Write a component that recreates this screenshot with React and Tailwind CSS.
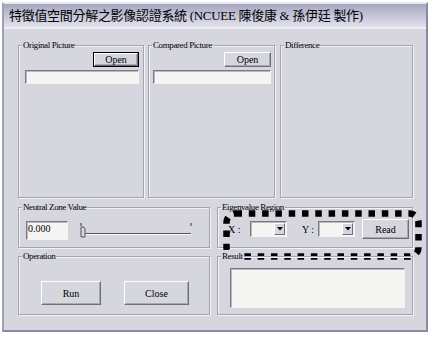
import React from "react"

const serif = { fontFamily: '"Liberation Serif", "Noto Sans CJK TC", serif' }

// etched group box with the caption sitting on the top line
const Group = ({ label, className = "", children }) => (
  <div className={`relative border border-[#a4a4b0] shadow-[inset_1px_1px_0_#f2f2f6,1px_1px_0_#f2f2f6] ${className}`}>
    <span className="absolute -top-[7px] left-[3px] bg-[#d6d6de] px-[1px] text-[9px] leading-[12px] tracking-[-0.4px] text-black">
      {label}
    </span>
    {children}
  </div>
)

const Button = ({ children, isDefault = false, className = "" }) => (
  <div className={`${isDefault ? "border border-black" : ""} ${className}`}>
    <div className="flex h-full w-full items-center justify-center border border-t-white border-l-white border-r-[#6e6e78] border-b-[#6e6e78] bg-[#d6d6de] text-[10px] text-black shadow-[inset_-1px_-1px_0_#a8a8b2]">
      {children}
    </div>
  </div>
)

const Field = ({ className = "", children }) => (
  <div className={`border border-t-[#7a7a82] border-l-[#7a7a82] border-r-[#f4f4f0] border-b-[#f4f4f0] bg-[#f5f5f3] shadow-[inset_1px_1px_0_#b8b8be] ${className}`}>
    {children}
  </div>
)

const Combo = () => (
  <Field className="flex h-[16px] w-[37px] justify-end p-[1px]">
    <div className="flex w-[11px] items-center justify-center border border-t-white border-l-white border-r-[#6e6e78] border-b-[#6e6e78] bg-[#d6d6de]">
      <svg width="6" height="4" viewBox="0 0 6 4">
        <path d="M0 0h6L3 3.5z" fill="#000" />
      </svg>
    </div>
  </Field>
)

const Slider = () => (
  <svg width="116" height="16" viewBox="0 0 116 16">
    <path d="M1 1v3M111 1v3" stroke="#333" strokeWidth="1" />
    <path d="M3 11.5h108" stroke="#555" strokeWidth="1" />
    <path d="M3 12.5h108" stroke="#fafafa" strokeWidth="1" />
    <path d="M1 5h3l1 2v8H1z" fill="#d6d6de" stroke="#555" strokeWidth="1" />
  </svg>
)

export default function App() {
  return (
    <div className="h-[337px] w-[433px] bg-white pl-[2px] pt-[2px]" style={serif}>
      <div className="h-[330px] w-[426px] border-2 border-t-[#e8e8f0] border-l-[#9e9eb6] border-r-[#8a8aa4] border-b-[#8a8aa4] bg-[#d6d6de]">
        <div className="flex h-[25px] items-center whitespace-nowrap border-b-[2px] border-b-[#eeeef4] bg-gradient-to-b from-[#a6a6c0] to-[#e2e2ee] pl-[5px] text-[13px] leading-none tracking-[-0.3px] text-black">
          特徵值空間分解之影像認證系統 (NCUEE 陳俊康 &amp; 孫伊廷 製作)
        </div>

        <div className="flex flex-col pl-[14px] pt-[16px]">
          <div className="flex h-[153px]">
            <Group label="Original Picture" className="w-[126px]">
              <div className="flex flex-col pt-[6px]">
                <Button isDefault className="ml-[74px] h-[15px] w-[46px]">Open</Button>
                <Field className="ml-[6px] mt-[3px] h-[14px] w-[114px]" />
              </div>
            </Group>
            <Group label="Compared Picture" className="ml-[4px] w-[127px]">
              <div className="flex flex-col pt-[6px]">
                <Button className="ml-[75px] h-[15px] w-[47px]">Open</Button>
                <Field className="ml-[4px] mt-[3px] h-[14px] w-[118px]" />
              </div>
            </Group>
            <Group label="Difference" className="ml-[5px] w-[133px]" />
          </div>

          <div className="mt-[9px] flex h-[41px]">
            <Group label="Neutral Zone Value" className="w-[192px]">
              <div className="flex items-start pl-[7px] pt-[13px]">
                <Field className="h-[19px] w-[42px] pl-[1px] text-[10px] leading-[13px]">0.000</Field>
                <div className="ml-[12px] mt-[1px]">
                  <Slider />
                </div>
              </div>
            </Group>
            <Group label="Eigenvalue Region" className="ml-[7px] w-[196px]">
              <div className="flex items-center pl-[10px] pt-[11px] text-[10px]">
                <span className="w-[22px]">X :</span>
                <Combo />
                <span className="ml-[15px] w-[16px]">Y :</span>
                <Combo />
                <Button className="ml-[7px] h-[20px] w-[47px]">Read</Button>
              </div>
              <svg className="pointer-events-none absolute left-[5px] top-[2px]" width="200" height="52" viewBox="0 0 200 52">
                <rect x="3.5" y="3.5" width="192" height="43" rx="9" fill="none" stroke="#000" strokeWidth="6.5" strokeDasharray="6.5 6.8" />
              </svg>
            </Group>
          </div>

          <div className="mt-[8px] flex h-[59px]">
            <Group label="Operation" className="w-[192px]">
              <div className="flex pl-[22px] pt-[24px]">
                <Button className="h-[24px] w-[60px]">Run</Button>
                <Button className="ml-[23px] h-[24px] w-[65px]">Close</Button>
              </div>
            </Group>
            <Group label="Result" className="ml-[7px] w-[196px]">
              <div className="pl-[12px] pt-[11px]">
                <Field className="h-[40px] w-[175px]" />
              </div>
            </Group>
          </div>
        </div>
      </div>
    </div>
  )
}
